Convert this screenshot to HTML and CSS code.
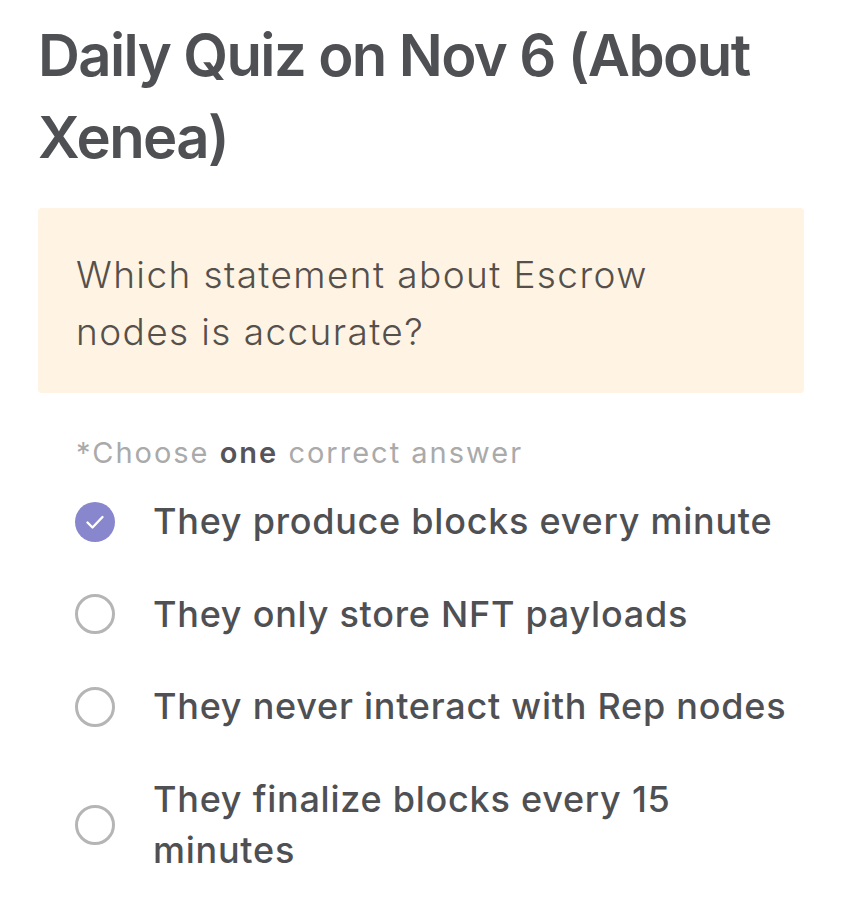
FILE: index.html
```html
<!DOCTYPE html>
<html>
<head>
<meta charset="utf-8">
<link rel="stylesheet" href="styles.css">
</head>
<body>
<main class="quiz">
  <h1 class="title">Daily Quiz on Nov 6 (About Xenea)</h1>
  <section class="question">
    <p>Which statement about Escrow nodes is accurate?</p>
  </section>
  <p class="hint">*Choose <b>one</b> correct answer</p>
  <ul class="options">
    <li class="option selected">
      <span class="radio"><svg viewBox="0 0 40 40" width="40" height="40"><circle cx="20" cy="20" r="20" fill="#8886cc"/><path d="M12.5 20.5 L17.5 25.5 L27.5 15" fill="none" stroke="#fff" stroke-width="2.4" stroke-linecap="round" stroke-linejoin="round"/></svg></span>
      <span class="label">They produce blocks every minute</span>
    </li>
    <li class="option">
      <span class="radio empty"></span>
      <span class="label">They only store NFT payloads</span>
    </li>
    <li class="option">
      <span class="radio empty"></span>
      <span class="label">They never interact with Rep nodes</span>
    </li>
    <li class="option">
      <span class="radio empty"></span>
      <span class="label">They finalize blocks every 15 minutes</span>
    </li>
  </ul>
</main>
</body>
</html>
```
FILE: styles.css
```css
* { box-sizing: border-box; }
html, body { margin: 0; padding: 0; background: #fff; }
body { font-family: Inter, "Noto Sans", sans-serif; }
.quiz { width: 766px; margin-left: 38px; padding-top: 14px; }
.title {
  margin: 0;
  font-size: 58px;
  line-height: 82px;
  font-weight: 600;
  color: #4f5053;
  letter-spacing: -1.6px;
}
.question {
  margin-top: 30px;
  background: #fff4e3;
  border-radius: 4px;
  padding: 38px 38px 33px;
}
.question p {
  margin: 0;
  font-size: 37px;
  line-height: 57px;
  font-weight: 300;
  color: #55504c;
  letter-spacing: 1.4px;
  width: 630px;
}
.hint {
  margin: 40px 0 0 38px;
  font-size: 29px;
  line-height: 40px;
  color: #aaaaaa;
  font-weight: 400;
  letter-spacing: 2px;
}
.hint b { color: #555559; font-weight: 600; }
.options { list-style: none; margin: 23px 0 0 37px; padding: 0; }
.option {
  display: flex;
  align-items: center;
  gap: 38px;
  min-height: 51px;
  margin-bottom: 41.5px;
}
.radio { flex: 0 0 40px; width: 40px; height: 40px; display: block; }
.radio svg { display: block; }
.radio.empty { border: 3px solid #b5b5b5; border-radius: 50%; }
.label {
  font-size: 36px;
  line-height: 51px;
  color: #4f5053;
  font-weight: 500;
  letter-spacing: 0.75px;
  width: 650px;
}
```
